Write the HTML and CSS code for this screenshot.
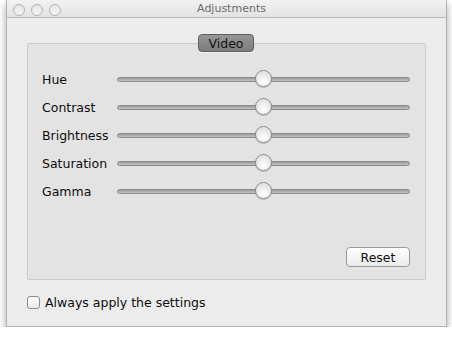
FILE: index.html
```html
<!DOCTYPE html>
<html lang="en">
<head>
    <meta charset="UTF-8">
    <title>Adjustments</title>
    <link rel="stylesheet" href="styles.css">
</head>
<body>
    <div class="window">
        <div class="titlebar">
            <div class="lights">
                <span class="light"></span>
                <span class="light"></span>
                <span class="light"></span>
            </div>
            <div class="title">Adjustments</div>
        </div>
        <div class="content">
            <div class="group">
                <div class="tab">Video</div>
                <div class="rows">
                    <div class="row">
                        <span class="label">Hue</span>
                        <div class="slider"><div class="track"></div><div class="thumb"></div></div>
                    </div>
                    <div class="row">
                        <span class="label">Contrast</span>
                        <div class="slider"><div class="track"></div><div class="thumb"></div></div>
                    </div>
                    <div class="row">
                        <span class="label">Brightness</span>
                        <div class="slider"><div class="track"></div><div class="thumb"></div></div>
                    </div>
                    <div class="row">
                        <span class="label">Saturation</span>
                        <div class="slider"><div class="track"></div><div class="thumb"></div></div>
                    </div>
                    <div class="row">
                        <span class="label">Gamma</span>
                        <div class="slider"><div class="track"></div><div class="thumb"></div></div>
                    </div>
                </div>
                <div class="actions">
                    <button class="reset">Reset</button>
                </div>
            </div>
            <label class="check">
                <span class="box"></span>
                <span>Always apply the settings</span>
            </label>
        </div>
    </div>
</body>
</html>
```

FILE: styles.css
```css
body {
    margin: 0;
    padding: 0 6px;
    background-color: #ffffff;
    font-family: "DejaVu Sans", sans-serif;
    font-size: 12.5px;
    color: #0d0d0d;
}

.window {
    width: 439px;
    height: 326px;
    background-color: #ececec;
    border: 1px solid #b4b4b4;
    border-top: none;
    box-shadow: 0 4px 8px rgba(0, 0, 0, 0.35);
    display: flex;
    flex-direction: column;
}

.titlebar {
    height: 17px;
    border-bottom: 1px solid #b9b9b9;
    background: linear-gradient(#f2f2f2, #e3e3e3);
    position: relative;
    display: flex;
    align-items: center;
    justify-content: center;
    padding-left: 10px;
}

.lights {
    position: absolute;
    left: 6px;
    top: 4px;
    display: flex;
    gap: 6px;
}

.light {
    width: 12px;
    height: 12px;
    border-radius: 50%;
    border: 1px solid #b3b3b3;
    background: linear-gradient(#e6e6e6, #f4f4f4);
    box-sizing: border-box;
}

.title {
    font-size: 11px;
    color: #6b6b6b;
}

.content {
    flex: 1;
    padding: 25px 20px 0 20px;
    display: flex;
    flex-direction: column;
}

.group {
    height: 237px;
    box-sizing: border-box;
    background-color: #e3e3e3;
    border: 1px solid #cbcbcb;
    border-radius: 2px;
    display: flex;
    flex-direction: column;
    padding: 0 15px 13px 14px;
}

.tab {
    align-self: center;
    margin-top: -10px;
    width: 56px;
    height: 18px;
    box-sizing: border-box;
    border: 1px solid #5e5e5e;
    border-radius: 4px;
    background: linear-gradient(#969696, #7c7c7c);
    display: flex;
    align-items: center;
    justify-content: center;
    font-size: 12.5px;
    color: #111111;
    box-shadow: 0 1px 0 rgba(255, 255, 255, 0.6);
}

.rows {
    margin-top: 13px;
    display: flex;
    flex-direction: column;
}

.row {
    height: 28px;
    display: flex;
    align-items: center;
}

.label {
    width: 75px;
}

.slider {
    flex: 1;
    height: 18px;
    position: relative;
    display: flex;
    align-items: center;
}

.track {
    flex: 1;
    height: 5px;
    box-sizing: border-box;
    border-radius: 3px;
    border: 1px solid #8a8a8a;
    background: linear-gradient(#9c9c9c, #c4c4c4);
}

.thumb {
    position: absolute;
    left: 138px;
    top: 0;
    width: 17px;
    height: 17px;
    box-sizing: border-box;
    border-radius: 50%;
    border: 1px solid #8c8c8c;
    background: radial-gradient(circle at 50% 70%, #ffffff, #e4e4e4 70%);
    box-shadow: 0 1px 1px rgba(0, 0, 0, 0.2);
}

.actions {
    margin-top: auto;
    display: flex;
    justify-content: flex-end;
}

.reset {
    width: 64px;
    height: 20px;
    margin-bottom: -1px;
    border: 1px solid #9a9a9a;
    border-radius: 4px;
    background: linear-gradient(#ffffff, #ececec);
    font-family: "DejaVu Sans", sans-serif;
    font-size: 12.5px;
    color: #111111;
    padding: 0;
}

.check {
    margin-top: 15px;
    display: flex;
    align-items: center;
    gap: 5px;
}

.box {
    width: 13px;
    height: 13px;
    box-sizing: border-box;
    border: 1px solid #8e8e8e;
    border-radius: 3px;
    background: linear-gradient(#ffffff, #e8e8e8);
}
```
